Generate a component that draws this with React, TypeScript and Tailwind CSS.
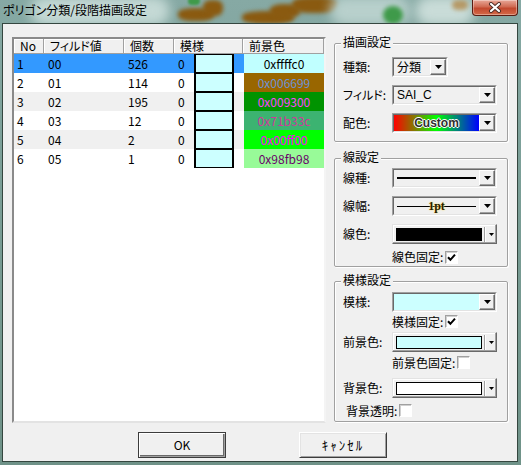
import React from 'react';

type Row = {
  no: string;
  val: string;
  cnt: string;
  hex: string;
  bg: string;
  fg: string;
  rowBg: string;
};

const rows: Row[] = [
  { no: '1', val: '00', cnt: '526', hex: '0xffffc0', bg: 'bg-[#c0ffff]', fg: 'text-black', rowBg: 'bg-[#3399ff]' },
  { no: '2', val: '01', cnt: '114', hex: '0x006699', bg: 'bg-[#996600]', fg: 'text-[#6b93d6]', rowBg: 'bg-white' },
  { no: '3', val: '02', cnt: '195', hex: '0x009300', bg: 'bg-[#009300]', fg: 'text-[#ff44ff]', rowBg: 'bg-[#f0f0f0]' },
  { no: '4', val: '03', cnt: '12', hex: '0x71b33c', bg: 'bg-[#3cb371]', fg: 'text-[#d0389c]', rowBg: 'bg-white' },
  { no: '5', val: '04', cnt: '2', hex: '0x00ff00', bg: 'bg-[#00ff00]', fg: 'text-[#ff00ff]', rowBg: 'bg-[#f0f0f0]' },
  { no: '6', val: '05', cnt: '1', hex: '0x98fb98', bg: 'bg-[#98fb98]', fg: 'text-[#6a006a]', rowBg: 'bg-white' },
];

const headers = [
  { label: 'No', w: 'w-[30px]' },
  { label: 'フィルド値', w: 'w-[80px]' },
  { label: '個数', w: 'w-[50px]' },
  { label: '模様', w: 'w-[69px]' },
  { label: '前景色', w: 'w-[81px]' },
];

function ArrowBtn() {
  return (
    <div className="w-[16px] h-full shrink-0 bg-[#f0f0f0] border border-t-white border-l-white border-r-[#696969] border-b-[#696969] shadow-[inset_-1px_-1px_0_#a0a0a0] flex items-center justify-center">
      <svg width="7" height="4" viewBox="0 0 7 4">
        <path d="M0 0h7L3.5 4z" fill="#000" />
      </svg>
    </div>
  );
}

// sunken combo box (classic 3D look)
function Combo({ w, children }: { w: string; children: React.ReactNode }) {
  return (
    <div className={`${w} h-[20px] border border-t-[#a0a0a0] border-l-[#a0a0a0] border-r-white border-b-white`}>
      <div className="h-full flex border border-t-[#696969] border-l-[#696969] border-r-[#e3e3e3] border-b-[#e3e3e3]">
        <div className="flex-1 min-w-0 h-full flex items-center">{children}</div>
        <ArrowBtn />
      </div>
    </div>
  );
}

// colour picker style combo
function ColorCombo({ fill }: { fill: string }) {
  return (
    <div className="w-[105px] h-[20px] flex items-center bg-[#f0f0f0] border border-t-[#e3e3e3] border-l-[#e3e3e3] border-r-[#696969] border-b-[#696969] shadow-[inset_-1px_-1px_0_#a0a0a0,inset_1px_1px_0_#fff]">
      <div className={`ml-[3px] w-[86px] h-[13px] border border-black ${fill}`} />
      <div className="ml-[2px] w-[2px] h-[15px] border-l border-l-[#a0a0a0] border-r border-r-white" />
      <div className="flex-1 flex items-center justify-center">
        <svg width="5" height="3" viewBox="0 0 5 3">
          <path d="M0 0h5L2.5 3z" fill="#000" />
        </svg>
      </div>
    </div>
  );
}

function Check({ checked }: { checked?: boolean }) {
  return (
    <span className="w-[13px] h-[13px] shrink-0 bg-white border border-t-[#a0a0a0] border-l-[#a0a0a0] border-r-white border-b-white shadow-[inset_1px_1px_0_#d0d0d0] flex items-center justify-center">
      {checked && (
        <svg width="9" height="9" viewBox="0 0 9 9">
          <path d="M1 4.2 L3.4 6.8 L8 1.6" stroke="#000" strokeWidth="2" fill="none" />
        </svg>
      )}
    </span>
  );
}

function Group({ title, className, children }: { title: string; className: string; children: React.ReactNode }) {
  return (
    <div className={`relative border border-[#a0a0a0] rounded-[2px] shadow-[inset_1px_1px_0_#fff,1px_1px_0_#fff] ${className}`}>
      <span className="absolute -top-[10px] left-[6px] px-[2px] bg-[#f0f0f0] leading-[16px]">{title}</span>
      {children}
    </div>
  );
}

function Field({ label, children }: { label: string; children: React.ReactNode }) {
  return (
    <div className="flex items-center h-[20px]">
      <span className="w-[49px] shrink-0 leading-[16px]">{label}</span>
      {children}
    </div>
  );
}

export default function App() {
  return (
    <div className="relative w-[521px] h-[465px] overflow-hidden bg-[linear-gradient(to_bottom,#86a9a4,#7a9e96_40%,#6f9288)] font-['Noto_Sans_CJK_JP',sans-serif] [font-feature-settings:'palt'] text-[12px] text-black">
      {/* blurred glass backdrop */}
      <div className="absolute inset-x-0 top-0 h-[24px] overflow-hidden">
        <div className="absolute left-[30px] top-[-4px] w-[140px] h-[30px] rounded-full bg-[#c4d9d5] blur-[6px]" />
        <div className="absolute left-[178px] top-[8px] w-[36px] h-[13px] rounded-[40%] bg-[#8a5a10] blur-[2px]" />
        <div className="absolute left-[203px] top-[0px] w-[20px] h-[16px] rounded-[40%] bg-[#8a5a10] blur-[2px]" />
        <div className="absolute left-[242px] top-[11px] w-[52px] h-[13px] rounded-[40%] bg-[#8a5a10] blur-[2px]" />
        <div className="absolute left-[270px] top-[4px] w-[30px] h-[14px] rounded-[40%] bg-[#8a5a10] blur-[2px]" />
        <div className="absolute left-[292px] top-[-3px] w-[46px] h-[16px] rounded-[40%] bg-[#8a5a10] blur-[2px]" />
        <div className="absolute left-[188px] top-[-3px] w-[12px] h-[8px] rounded-full bg-[#3f9a4a] blur-[1px]" />
        <div className="absolute left-[330px] top-[-4px] w-[80px] h-[30px] rounded-full bg-[#b8d0cc] blur-[6px]" />
        <div className="absolute left-[383px] top-[6px] w-[20px] h-[18px] rounded-full bg-[#3f9a4a] blur-[2px]" />
        <div className="absolute left-[415px] top-[-4px] w-[60px] h-[30px] rounded-full bg-[#c9dcd8] blur-[6px]" />
        <div className="absolute left-[452px] top-[0px] w-[16px] h-[10px] rounded-full bg-[#b0803a] blur-[2px] opacity-70" />
      </div>

      {/* title bar */}
      <div className="relative h-[23px] pl-[3px] pt-[1px]">
        <span className="leading-[18px] text-[12px] text-black">ポリゴン分類/段階描画設定</span>
      </div>

      {/* close button */}
      <div className="absolute top-0 right-[3px] w-[46px] h-[16px] rounded-b-[4px] border border-t-0 border-[#5a1c12] bg-[linear-gradient(to_bottom,#e8a898,#d06a52_45%,#c2482e_55%,#d46a48)] shadow-[inset_0_0_0_1px_rgba(255,255,255,0.35)] flex items-center justify-center">
        <svg width="14" height="11" viewBox="0 0 14 11">
          <path d="M3 2 L11 9 M11 2 L3 9" stroke="#4a2a24" strokeWidth="4" strokeLinecap="round" />
          <path d="M3 2 L11 9 M11 2 L3 9" stroke="#fff" strokeWidth="2.2" strokeLinecap="round" />
        </svg>
      </div>

      {/* client area */}
      <div className="relative ml-[2px] w-[516px] h-[439px] border border-[#34463f] bg-[#f0f0f0]">
        <div className="flex items-start gap-[8px] pl-[9px] pt-[13px]">
          {/* list view */}
          <div className="w-[314px] h-[386px] border-2 border-t-[#8a8a8a] border-l-[#8a8a8a] border-r-[#f4f4f4] border-b-[#e3e3e3] bg-white">
            <div className="flex h-[15px]">
              {headers.map((h) => (
                <div
                  key={h.label}
                  className={`${h.w} h-full bg-[#f0f0f0] border-r border-b border-[#a0a0a0] shadow-[inset_1px_1px_0_#fff] pl-[6px] flex items-center leading-[14px]`}
                >
                  {h.label}
                </div>
              ))}
            </div>
            {rows.map((r) => (
              <div key={r.no} className={`flex h-[19px] ${r.rowBg}`}>
                <div className="w-[30px] pl-[3px] flex items-center">{r.no}</div>
                <div className="w-[80px] pl-[4px] flex items-center">{r.val}</div>
                <div className="w-[50px] pl-[4px] flex items-center">{r.cnt}</div>
                <div className="w-[69px] pl-[4px] flex items-center h-full">
                  <span className="w-[16px]">0</span>
                  <div className="w-[40px] h-full bg-[#ccffff] border-x-2 border-y border-black" />
                </div>
                <div className="w-[81px] h-full pl-[1px]">
                  <div className={`h-full ${r.bg} ${r.fg} flex items-center justify-center`}>{r.hex}</div>
                </div>
              </div>
            ))}
          </div>

          {/* settings column */}
          <div className="w-[174px] flex flex-col">
            <Group title="描画設定" className="mt-[6px] pl-[8px] pt-[13px] pb-[8px]">
              <div className="flex flex-col gap-[8px]">
                <Field label="種類:">
                  <Combo w="w-[56px]">
                    <span className="pl-[3px] leading-[16px]">分類</span>
                  </Combo>
                </Field>
                <Field label="フィルド:">
                  <Combo w="w-[105px]">
                    <span className="pl-[3px] leading-[16px] font-['Liberation_Sans',sans-serif] text-[12px]">SAI_C</span>
                  </Combo>
                </Field>
                <Field label="配色:">
                  <Combo w="w-[105px]">
                    <div className="w-full h-full bg-[linear-gradient(to_right,#ff0000,#00ff00,#0000ff)] flex items-center justify-center">
                      <span className="font-['Liberation_Sans',sans-serif] font-bold text-[12px] leading-[14px] text-[#303030] [text-shadow:0_0_1px_#fff,1px_0_0_#fff,-1px_0_0_#fff,0_1px_0_#fff,0_-1px_0_#fff]">
                        Custom
                      </span>
                    </div>
                  </Combo>
                </Field>
              </div>
            </Group>

            <Group title="線設定" className="mt-[16px] pl-[8px] pt-[9px] pb-[2px]">
              <div className="flex flex-col gap-[8px]">
                <Field label="線種:">
                  <Combo w="w-[105px]">
                    <div className="w-full h-full bg-[#f0f0f0] flex items-center px-[3px]">
                      <div className="w-full h-[2px] bg-black" />
                    </div>
                  </Combo>
                </Field>
                <Field label="線幅:">
                  <Combo w="w-[105px]">
                    <div className="relative w-full h-full bg-[#f0f0f0] flex items-center px-[3px]">
                      <div className="w-full h-px bg-black" />
                      <span className="absolute inset-0 flex items-center justify-center font-['Liberation_Serif',serif] font-bold text-[12px] leading-[12px] text-[#2a1e00] [text-shadow:0_0_2px_#ffe27a,0_0_1px_#ffe27a]">
                        1pt
                      </span>
                    </div>
                  </Combo>
                </Field>
                <Field label="線色:">
                  <ColorCombo fill="bg-black" />
                </Field>
              </div>
              <div className="mt-[6px] h-[14px] pl-[49px] flex items-center">
                <span className="leading-[14px]">線色固定:</span>
                <span className="ml-[2px]">
                  <Check checked />
                </span>
              </div>
            </Group>

            <Group title="模様設定" className="mt-[14px] pl-[8px] pt-[10px] pb-[4px]">
              <Field label="模様:">
                <Combo w="w-[105px]">
                  <div className="w-full h-full bg-[#ccffff]" />
                </Combo>
              </Field>
              <div className="mt-[3px] h-[13px] pl-[49px] flex items-center">
                <span className="leading-[13px]">模様固定:</span>
                <span className="ml-[2px]">
                  <Check checked />
                </span>
              </div>
              <div className="mt-[4px]">
                <Field label="前景色:">
                  <ColorCombo fill="bg-[#ccffff]" />
                </Field>
              </div>
              <div className="mt-[4px] h-[13px] pl-[49px] flex items-center">
                <span className="leading-[13px]">前景色固定:</span>
                <span className="ml-[2px]">
                  <Check />
                </span>
              </div>
              <div className="mt-[9px]">
                <Field label="背景色:">
                  <ColorCombo fill="bg-white" />
                </Field>
              </div>
              <div className="mt-[6px] h-[13px] pl-[3px] flex items-center">
                <span className="leading-[13px]">背景透明:</span>
                <span className="ml-[2px]">
                  <Check />
                </span>
              </div>
            </Group>
          </div>
        </div>

        {/* buttons */}
        <div className="flex gap-[73px] pl-[135px] mt-[9px]">
          <button className="w-[88px] h-[26px] bg-[#f0f0f0] border border-[#3c3c3c] shadow-[inset_1px_1px_0_#fff,inset_-1px_-1px_0_#a0a0a0,inset_-2px_-2px_0_#696969] flex items-center justify-center">
            OK
          </button>
          <button className="w-[88px] h-[26px] bg-[#f0f0f0] border border-t-white border-l-white border-r-[#3c3c3c] border-b-[#3c3c3c] shadow-[inset_1px_1px_0_#e3e3e3,inset_-1px_-1px_0_#a0a0a0] flex items-center justify-center">
            <span className="[font-feature-settings:normal] text-[13px] tracking-[2px]">ｷｬﾝｾﾙ</span>
          </button>
        </div>
      </div>
    </div>
  );
}
